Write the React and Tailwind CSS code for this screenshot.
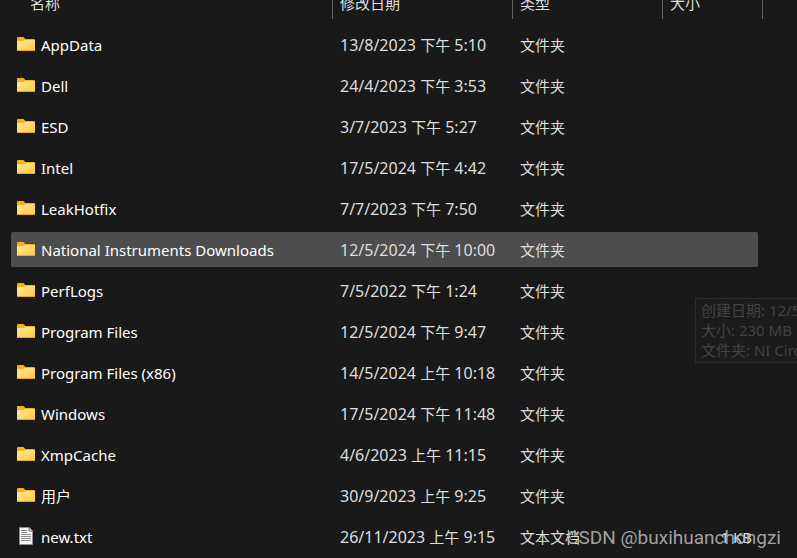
import React from "react";

const entries = [
  { name: "AppData", date: "13/8/2023", half: "下午", time: "5:10" },
  { name: "Dell", date: "24/4/2023", half: "下午", time: "3:53" },
  { name: "ESD", date: "3/7/2023", half: "下午", time: "5:27" },
  { name: "Intel", date: "17/5/2024", half: "下午", time: "4:42" },
  { name: "LeakHotfix", date: "7/7/2023", half: "下午", time: "7:50" },
  { name: "National Instruments Downloads", date: "12/5/2024", half: "下午", time: "10:00", active: true },
  { name: "PerfLogs", date: "7/5/2022", half: "下午", time: "1:24" },
  { name: "Program Files", date: "12/5/2024", half: "下午", time: "9:47" },
  { name: "Program Files (x86)", date: "14/5/2024", half: "上午", time: "10:18" },
  { name: "Windows", date: "17/5/2024", half: "下午", time: "11:48" },
  { name: "XmpCache", date: "4/6/2023", half: "上午", time: "11:15" },
  { name: "用户", date: "30/9/2023", half: "上午", time: "9:25" },
  { name: "new.txt", date: "26/11/2023", half: "上午", time: "9:15", file: true, size: "1 KB" },
];

function FolderIcon() {
  return (
    <svg width="18" height="16" viewBox="0 0 18 16" aria-hidden="true">
      <defs>
        <linearGradient id="folder-front" x1="0" y1="0" x2="1" y2="1">
          <stop offset="0" stopColor="#ffe8a0" />
          <stop offset="1" stopColor="#ffca3c" />
        </linearGradient>
      </defs>
      <path d="M0 1Q0 0 1 0H6Q6.8 0 7.3 .7L8.2 2H17Q18 2 18 3V6H0Z" fill="#f8b016" />
      <path d="M0 5Q0 4 1 4H6.5L8.5 3H17.2Q18 3 18 4V13Q18 14 17 14H1Q0 14 0 13Z" fill="url(#folder-front)" />
      <path d="M0 13H18Q18 14 17 14H1Q0 14 0 13Z" fill="#e9a820" />
    </svg>
  );
}

function TextFileIcon() {
  return (
    <svg width="18" height="20" viewBox="0 0 18 20" aria-hidden="true">
      <path d="M2.5 .5H12L15.5 4V17.5H2.5Z" fill="#f7f7f7" stroke="#8f8f8f" />
      <path d="M12 .5V4H15.5" fill="#d5d5d5" stroke="#777777" />
      <path d="M4 3.5H10M4 5.5H10M4 7.5H14M4 9.5H14M4 11.5H14M4 13.5H14" stroke="#8c8c8c" />
    </svg>
  );
}

function HeaderCell({ children, className = "" }) {
  return (
    <th scope="col" className="p-0 text-left align-top font-normal text-[#dedede]">
      <div className={`h-[34px] border-r border-[#636363] pt-2 leading-5 ${className}`}>{children}</div>
    </th>
  );
}

export default function App() {
  return (
    <main className="relative min-h-screen overflow-hidden bg-[#191919] pl-[11px] font-['Noto_Sans','Noto_Sans_CJK_SC',sans-serif] text-[15px] leading-5 text-[#dedede]">
      <table className="-mt-[21px] w-[747px] table-fixed border-separate border-spacing-x-0 border-spacing-y-[6px] whitespace-nowrap">
        <colgroup>
          <col className="w-[322px]" />
          <col className="w-[180px]" />
          <col className="w-[150px]" />
          <col className="w-[95px]" />
        </colgroup>
        <thead>
          <tr className="h-[36px]">
            <HeaderCell className="pl-[19px]">名称</HeaderCell>
            <HeaderCell className="pl-[7px]">修改日期</HeaderCell>
            <HeaderCell className="pl-[7px]">类型</HeaderCell>
            <HeaderCell className="-mr-[5px] pl-[7px]">大小</HeaderCell>
          </tr>
        </thead>
        <tbody>
          {entries.map((entry) => (
            <tr key={entry.name} className="h-[35px]">
              <td className={`rounded-l-xs py-0 pr-0 pl-[6px] text-white ${entry.active ? "bg-[#4d4d4d]" : ""}`}>
                <div className="flex items-center gap-[6px]">
                  {entry.file ? <TextFileIcon /> : <FolderIcon />}
                  <span>{entry.name}</span>
                </div>
              </td>
              <td className={`py-0 pr-0 pl-[7px] text-base leading-5 ${entry.active ? "bg-[#4d4d4d]" : ""}`}>
                {entry.date} <span className="text-[15px]">{entry.half}</span> {entry.time}
              </td>
              <td className={`py-0 pr-0 pl-[7px] ${entry.active ? "bg-[#4d4d4d]" : ""}`}>
                {entry.file ? "文本文档" : "文件夹"}
              </td>
              <td className={`rounded-r-xs py-0 pr-[6px] pl-0 text-right ${entry.active ? "bg-[#4d4d4d]" : ""}`}>
                {entry.size}
              </td>
            </tr>
          ))}
        </tbody>
      </table>

      <div
        role="tooltip"
        className="absolute top-[298px] left-[695px] w-[240px] border border-[#2b2b2b] bg-[#1b1b1b] pt-px pb-[2px] pl-[5px] whitespace-nowrap text-[#424242]"
      >
        <p>创建日期: 12/5</p>
        <p>大小: 230 MB</p>
        <p>文件夹: NI Circ</p>
      </div>

      <p className="absolute right-4 bottom-2 font-['Roboto',sans-serif] text-[19px] leading-7 text-[#b4b4b4]/90">
        CSDN @buxihuanchongzi
      </p>
    </main>
  );
}
